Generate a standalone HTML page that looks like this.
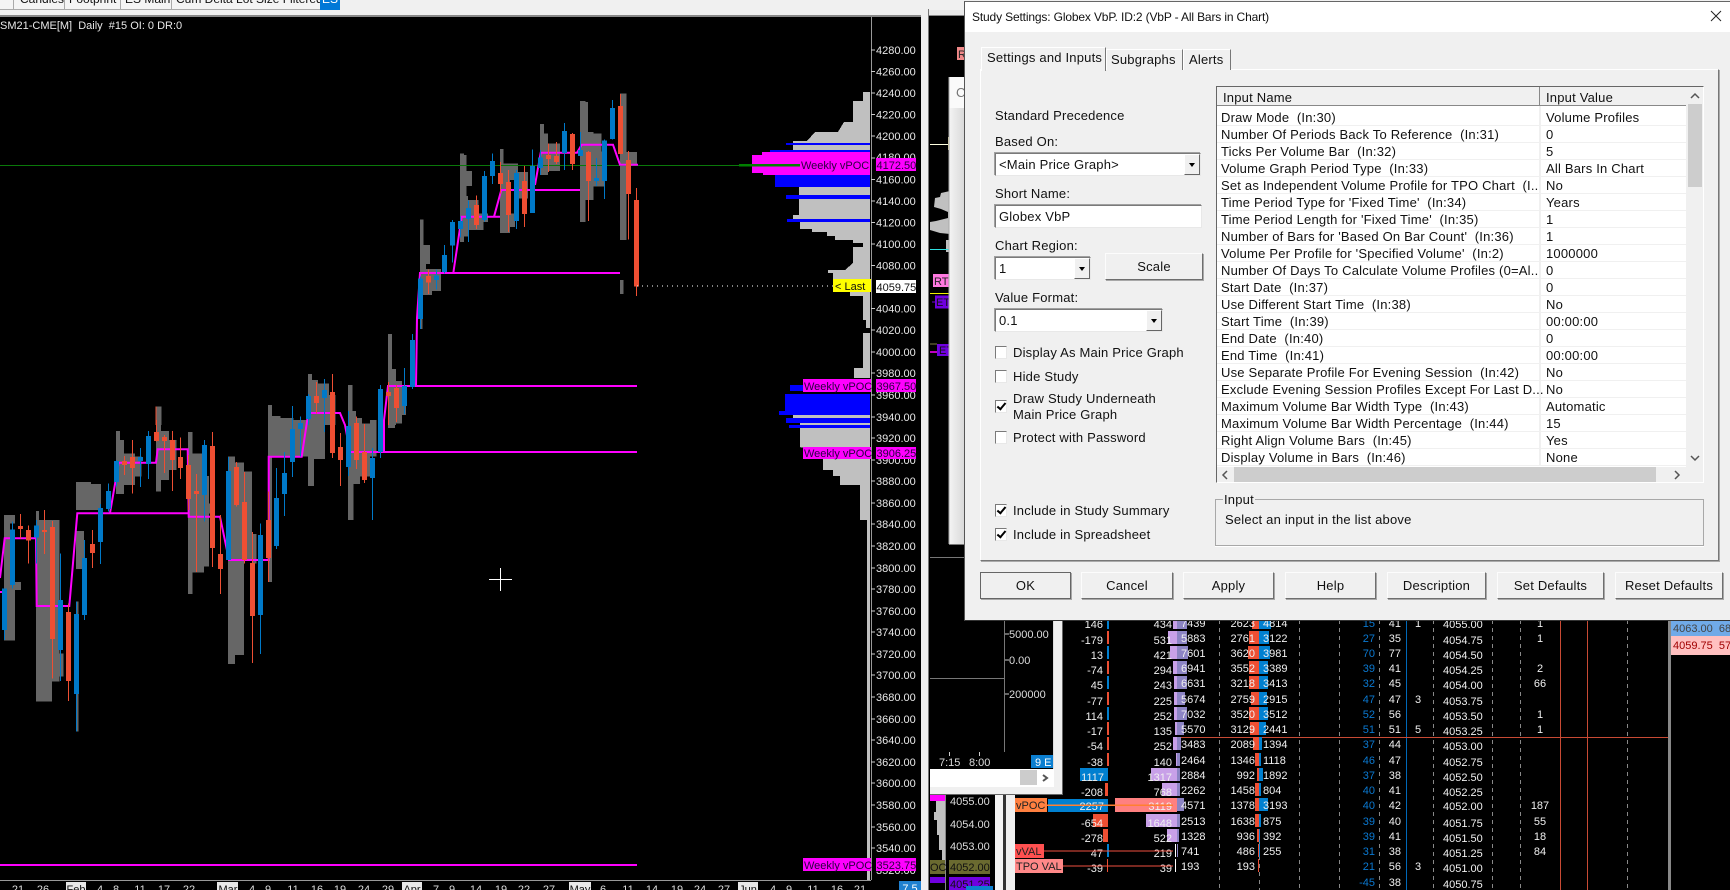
<!DOCTYPE html>
<html><head><meta charset="utf-8"><title>Study Settings</title>
<style>
html,body{margin:0;padding:0;background:#000;width:1730px;height:890px;overflow:hidden;font-family:"Liberation Sans",sans-serif}
svg{position:absolute;left:0;top:0}
.a{position:absolute;white-space:pre;font-size:13px;line-height:15px;letter-spacing:.2px;color:#111}
.b{position:absolute;background:#f0f0f0;border:1px solid;border-color:#fcfcfc #6e6e6e #6e6e6e #fcfcfc;font-size:13px;letter-spacing:.2px;color:#111;text-align:center;box-sizing:border-box;line-height:25px;box-shadow:1px 1px 0 #a8a8a8}
.f{position:absolute;background:#fff;border:1px solid;border-color:#7a7a7a #e8e8e8 #e8e8e8 #7a7a7a;box-sizing:border-box;font-size:13px;letter-spacing:.2px;color:#111;line-height:21px;padding-left:3px;white-space:pre;box-shadow:-1px -1px 0 #a0a0a0}
.ar{position:absolute;right:0;top:0;bottom:0;width:16px;background:#f0f0f0;border:1px solid;border-color:#fff #666 #666 #fff;box-sizing:border-box}
.ar:after{content:"";position:absolute;left:4px;top:8px;border:3px solid transparent;border-top:4px solid #000}
.c{position:absolute;width:12px;height:13px;background:#fff;border:1px solid;border-color:#7a7a7a #e8e8e8 #e8e8e8 #7a7a7a;box-sizing:border-box}
.c.k:after{content:"";position:absolute;left:3px;top:0;width:3px;height:7px;border:solid #000;border-width:0 2px 2px 0;transform:rotate(40deg)}
.r{position:absolute;left:1217px;width:469px;height:16px;background:#fff;border-bottom:1px solid #f0f0f0}
.r span{position:absolute;top:1px;white-space:pre;font-size:13px;line-height:16px;letter-spacing:.2px;color:#111}
.r span:first-child{left:4px}
.r span:last-child{left:329px}
</style></head><body>

<!-- top chrome -->
<div style="position:absolute;left:0;top:0;width:1730px;height:15px;background:#f0f0f0"></div>
<div style="position:absolute;left:0;top:15px;width:922px;height:2px;background:#888"></div>
<div style="position:absolute;left:0;top:0;width:320px;height:9px;background:#f4f4f4;border-bottom:1px solid #aaa"></div>
<div class="a" style="left:20px;top:-8px;font-size:12px;letter-spacing:0">Candles</div>
<div class="a" style="left:69px;top:-8px;font-size:12px;letter-spacing:0">Footprint</div>
<div class="a" style="left:125px;top:-8px;font-size:12px;letter-spacing:0">ES Main</div>
<div class="a" style="left:176px;top:-8px;font-size:12px;letter-spacing:0">Cum Delta Lot Size Filtered</div>
<div style="position:absolute;left:13px;top:0;width:1px;height:9px;background:#aaa"></div>
<div style="position:absolute;left:64px;top:0;width:1px;height:9px;background:#aaa"></div>
<div style="position:absolute;left:120px;top:0;width:1px;height:9px;background:#aaa"></div>
<div style="position:absolute;left:171px;top:0;width:1px;height:9px;background:#aaa"></div>
<div class="a" style="left:320px;top:-8px;width:20px;height:18px;background:#0078d7;color:#fff;font-size:12px;letter-spacing:0;text-align:center">ES</div>

<svg width="1730" height="890" viewBox="0 0 1730 890" font-family="Liberation Sans, sans-serif" font-size="11">
<!-- separators / windows behind -->
<rect x="921" y="9" width="8" height="881" fill="#f0f0f0"/>
<rect x="928" y="9" width="1" height="881" fill="#777"/>
<rect x="929" y="10" width="40" height="5" fill="#e8e8e8"/>
<rect x="929" y="15" width="40" height="1" fill="#888"/>

<g shape-rendering="crispEdges">
<!-- gray VbP in chart -->
<g fill="#666">
<path transform="translate(0 290) scale(.33333)" d="M468 350H484V405H468zM804 345H816V405H804zM816 378H842V405H816zM842 384H880V405H842zM924 252H936V405H924zM936 270H954V405H936zM954 280H987V405H954zM987 315H1007V405H987zM1044 285H1058V405H1044zM1058 363H1068V405H1058zM1068 384H1086V405H1068zM1086 402H1098V405H1086zM1164 132H1176V405H1164zM1176 237H1188V405H1176zM1188 273H1206V400H1188zM1206 290H1218V375H1206zM1260 0H1268V117H1260zM1268 0H1296V14H1268z"/>
<path transform="translate(0 420) scale(.33333)" d="M12 285H45V310H12zM12 310H30V486H12zM12 486H63V510H12zM12 510H45V662H12zM108 273H117V300H108zM108 300H156V845H108zM156 300H178V785H156zM178 700H190V770H178zM228 186H273V192H228zM228 192H303V270H228zM228 333H252V447H228zM228 545H236V935H228zM348 33H360V222H348zM360 60H372V222H360zM372 100H405V195H372zM405 110H425V170H405zM468 0H483V215H468zM468 33H507V180H468zM507 60H530V150H507zM564 36H578V522H564zM578 100H612V458H578zM612 168H627V440H612zM627 250H635V280H627zM684 110H705V732H684zM705 128H732V705H705zM732 155H756V420H732zM756 342H770V430H756zM804 0H816V486H804zM816 0H925V110H816zM924 0H942V198H924zM942 0H975V117H942zM1044 0H1060V300H1044zM1060 0H1080V192H1060zM1080 10H1110V170H1080zM1110 0H1130V110H1110zM1164 0H1185V24H1164z"/>
<path transform="translate(400 80) scale(.33333)" d="M60 418H70V640H60zM70 495H90V552H70zM60 552H78V645H60zM78 567H123V633H78zM78 633H96V645H78zM180 220H192V486H180zM192 225H200V470H192zM200 273H216V318H200zM192 348H204V470H192zM204 360H235V450H204zM235 400H250V450H235zM250 400H264V426H250zM300 207H310V459H300zM310 250H354V300H310zM310 300H330V459H310zM330 400H345V441H330zM354 276H384V356H354zM420 132H432V285H420zM432 160H444V285H432zM444 190H480V273H444zM540 63H556V426H540zM556 66H564V360H556zM564 156H580V360H564zM580 160H604V320H580zM604 215H612V320H604zM660 40H680V480H660zM680 216H711V256H680zM660 600H670V642H660z"/>
</g>
</g>

<!-- right gray profile -->
<g shape-rendering="crispEdges">
<path fill="#c0c0c0" d="M870 92H863V101H853V122H844L838 132H815L807 141H793V150H799V215H793V219H800V229H812V232H827V236H835V240H853V243H863V247H853V263L845 270H828V273H833V292H850V296H863V320H866V328H870zM870 333H863V368H854V378H870zM793 414H870V418H793zM800 423H870V425H800zM800 428H870V447H800zM799 447H870V458H823V470H833V476H840V485H860V520H867V880H870V458z"/>
<path fill="#0000ff" d="M786 143H870V145H786zM770 150H870V152H770zM775 175H870V187H775zM786 195H870V199H786zM787 219H870V222H787zM790 385H870V391H790zM785 394H870V411H785zM779 411H870V415H779zM786 418H870V423H786zM789 425H870V428H789z"/>
<path fill="#ff00ff" d="M762 152H870V155H762zM752 155H870V173H752zM763 173H870V175H763z"/>
</g>

<!-- green line -->
<rect x="0" y="165" width="740" height="1" fill="#0a780a"/>
<rect x="739" y="164" width="61" height="2.500" fill="#008000"/>

<!-- magenta -->
<path fill="none" stroke="#ff00ff" stroke-width="2" d="M0 578L4.700 538.300H36L36.700 606H69.300L77.300 513.300H188.700M110 513L118.700 462.700H156L157.700 449.300H187.700L188.700 516.700H220L229 560H268.700V456.700H301.700L308 415L310 413H340L345 425L350 452H637M384 452V420L388 386H637M416 386L417 318L420 273H620M453.300 273L461.700 216.700H500M494 216.700L501.300 190H580M535 185L540.700 152.700H577L581.700 144.700H613L620 164.700H638M0 865H637"/>
<path fill="none" stroke="#ff00ff" stroke-width="2" d="M0 592H3"/>

<!-- candles -->
<g shape-rendering="crispEdges" fill="none">
<g transform="translate(0 290) scale(.33333)">
<path stroke="#0079c8" stroke-width="3" d="M877 348V405M901 380V405M925 312V405M973 267V405M1045 363V405M1141 285V405M1213 234V372M1237 132V297M1261 0V117"/>
<path stroke="#0079c8" stroke-width="15" d="M901 399V405M925 318V387M973 300V324M1141 297V405M1213 288V348M1237 150V291M1261 0V87"/>
<path stroke="#ee4f33" stroke-width="3" d="M468 350V405M949 276V370M997 252V405M1069 380V405M1165 276V405M1189 285V396M1285 0V12"/>
<path stroke="#ee4f33" stroke-width="15" d="M949 318V339M997 306V405M1069 399V405M1165 306V318M1189 294V354"/>
</g>
<g transform="translate(0 420) scale(.33333)">
<path stroke="#0079c8" stroke-width="3" d="M13 505V660M37 305V505M109 300V430M181 400V783M229 545V935M253 360V600M301 252V432M325 190V275M349 120V200M421 84V201M445 33V177M613 60V305M685 111V420M781 310V702M829 144V387M853 96V288M877 0V171M901 0V110M973 0V36M1045 0V168M1117 84V300M1141 0V114"/>
<path stroke="#0079c8" stroke-width="15" d="M13 505V630M37 328V495M109 316V352M181 540V690M229 582V822M253 414V585M301 264V366M325 213V267M349 123V186M421 111V123M445 48V132M613 75V225M685 153V420M781 345V585M829 234V378M853 159V222M877 27V126M901 9V27M1045 18V141M1117 114V174M1141 0V96"/>
<path stroke="#ee4f33" stroke-width="3" d="M61 282V355M85 316V430M133 270V402M157 303V775M205 550V843M277 330V444M373 108V165M397 60V220M469 0V65M493 45V159M517 33V213M541 52V177M565 105V270M589 162V456M637 36V441M661 285V522M709 126V260M733 156V430M757 336V729M805 215V486M997 0V114M1021 39V198M1069 0V147M1093 12V189"/>
<path stroke="#ee4f33" stroke-width="15" d="M61 318V327M85 330V362M133 330V336M157 321V657M205 576V783M277 372V399M373 123V135M397 111V144M469 36V63M493 51V63M517 60V120M541 111V144M565 135V237M589 213V222M637 78V384M661 402V447M709 141V255M733 246V420M757 429V588M805 300V414M997 0V99M1021 81V120M1069 9V120M1093 96V180"/>
</g>
<g transform="translate(400 80) scale(.33333)">
<path stroke="#0079c8" stroke-width="3" d="M61 590V720M109 568V628M133 495V580M157 420V548M181 410V472M205 362V486M253 273V425M277 220V312M349 270V447M397 208V399M421 210V285M493 129V270M541 156V228M589 234V318M613 178V357M637 60V178"/>
<path stroke="#0079c8" stroke-width="15" d="M61 595V716M109 586V600M133 525V576M157 426V497M181 423V447M205 384V417M253 288V420M277 243V288M349 279V423M397 258V399M421 232V264M493 153V219M541 210V228M589 294V303M613 182V303M637 84V177"/>
<path stroke="#ee4f33" stroke-width="3" d="M85 568V640M229 346V447M301 246V340M325 270V456M373 258V441M445 190V276M469 186V252M517 159V270M565 213V423M661 42V222M685 213V478M709 324V648"/>
<path stroke="#ee4f33" stroke-width="15" d="M85 588V608M229 375V435M301 279V312M325 306V405M373 303V402M445 225V237M469 228V246M517 162V252M565 216V303M661 78V222M685 240V342M709 360V620"/>
</g>
</g>

<!-- last dotted, crosshair -->
<path d="M637 286H833" stroke="#fff" stroke-dasharray="1 4" stroke-width="1"/>
<path d="M489 579.500H512M500.500 568V591" stroke="#fff" stroke-width="1" fill="none"/>

<!-- chart title -->
<text x="0" y="29" fill="#e8e8e8" font-size="11" xml:space="preserve">SM21-CME[M]  Daily  #15 OI: 0 DR:0</text>

<!-- price axis -->
<rect x="871" y="17" width="1" height="863" fill="#999"/>
<path stroke="#ccc" d="M871 50h4M871 71.500h4M871 93h4M871 114.500h4M871 136h4M871 158h4M871 179.500h4M871 201h4M871 222.500h4M871 244h4M871 265.500h4M871 308.500h4M871 330h4M871 352h4M871 373h4M871 395h4M871 417h4M871 438h4M871 460h4M871 481h4M871 503h4M871 524h4M871 546h4M871 568h4M871 589h4M871 611h4M871 632h4M871 654h4M871 675h4M871 697h4M871 719h4M871 740h4M871 762h4M871 783h4M871 805h4M871 827h4M871 848h4"/>
<g fill="#e8e8e8">
<text x="876" y="54">4280.00</text><text x="876" y="75.500">4260.00</text><text x="876" y="97">4240.00</text><text x="876" y="118.500">4220.00</text><text x="876" y="140">4200.00</text><text x="876" y="161">4180.00</text><text x="876" y="183.500">4160.00</text><text x="876" y="205">4140.00</text><text x="876" y="226.500">4120.00</text><text x="876" y="248">4100.00</text><text x="876" y="269.500">4080.00</text><text x="876" y="312.500">4040.00</text><text x="876" y="334">4020.00</text><text x="876" y="356">4000.00</text><text x="876" y="377">3980.00</text><text x="876" y="399">3960.00</text><text x="876" y="421">3940.00</text><text x="876" y="442">3920.00</text><text x="876" y="464">3900.00</text><text x="876" y="485">3880.00</text><text x="876" y="507">3860.00</text><text x="876" y="528">3840.00</text><text x="876" y="550">3820.00</text><text x="876" y="572">3800.00</text><text x="876" y="593">3780.00</text><text x="876" y="615">3760.00</text><text x="876" y="636">3740.00</text><text x="876" y="658">3720.00</text><text x="876" y="679">3700.00</text><text x="876" y="701">3680.00</text><text x="876" y="723">3660.00</text><text x="876" y="744">3640.00</text><text x="876" y="766">3620.00</text><text x="876" y="787">3600.00</text><text x="876" y="809">3580.00</text><text x="876" y="831">3560.00</text><text x="876" y="852">3540.00</text><text x="876" y="874">3520.00</text>
</g>

<!-- vPOC labels -->
<g fill="#ff00ff" shape-rendering="crispEdges">
<rect x="876" y="158" width="40" height="13"/><rect x="803" y="379" width="68" height="13"/><rect x="876" y="379" width="40" height="13"/><rect x="803" y="447" width="68" height="12"/><rect x="876" y="447" width="40" height="12"/><rect x="803" y="858" width="68" height="13"/><rect x="876" y="858" width="40" height="13"/>
</g>
<g fill="#2a0040">
<text x="801" y="169">Weekly vPOC</text><text x="876.500" y="169">4172.50</text>
<text x="804" y="390">Weekly vPOC</text><text x="876.500" y="390">3967.50</text>
<text x="804" y="457">Weekly vPOC</text><text x="876.500" y="457">3906.25</text>
<text x="804" y="869">Weekly vPOC</text><text x="876.500" y="869">3523.75</text>
</g>
<rect x="833" y="279" width="38" height="13" fill="#ffff00"/>
<text x="835" y="290" fill="#111" xml:space="preserve">&lt; Last</text>
<rect x="876" y="280" width="40" height="13" fill="#fff"/>
<text x="876.500" y="291" fill="#111">4059.75</text>

<!-- bottom axis -->
<rect x="0" y="880" width="871" height="1" fill="#999"/>
<g fill="#dcdcdc" text-anchor="middle">
<text x="18" y="893">21</text><text x="43" y="893">26</text><text x="100" y="893">4</text><text x="116" y="893">8</text><text x="140" y="893">11</text><text x="164" y="893">17</text><text x="189" y="893">22</text><text x="252" y="893">4</text><text x="268" y="893">9</text><text x="293" y="893">11</text><text x="317" y="893">16</text><text x="340" y="893">19</text><text x="364" y="893">24</text><text x="388" y="893">29</text><text x="436" y="893">7</text><text x="452" y="893">9</text><text x="476" y="893">14</text><text x="501" y="893">19</text><text x="524" y="893">22</text><text x="549" y="893">27</text><text x="603" y="893">6</text><text x="628" y="893">11</text><text x="652" y="893">14</text><text x="677" y="893">19</text><text x="700" y="893">24</text><text x="724" y="893">27</text><text x="773" y="893">4</text><text x="789" y="893">9</text><text x="813" y="893">11</text><text x="837" y="893">16</text><text x="860" y="893">21</text>
</g>
<g fill="#e8e8e8"><rect x="66" y="882" width="20" height="8"/><rect x="217" y="882" width="21" height="8"/><rect x="402" y="882" width="20" height="8"/><rect x="569" y="882" width="22" height="8"/><rect x="738" y="882" width="20" height="8"/></g>
<g fill="#111" text-anchor="middle"><text x="76" y="893">Feb</text><text x="228" y="893">Mar</text><text x="412" y="893">Apr</text><text x="580" y="893">May</text><text x="748" y="893">Jun</text></g>
<rect x="899" y="881" width="22" height="9" fill="#1f80d0"/>
<text x="910" y="892" fill="#fff" text-anchor="middle">7.5</text>

<!-- middle window contents -->
<path fill="#c0c0c0" d="M950 191L941 193L940 197L935 198L934 207L941 209L948 212V218L936 221L930 222V230L940 233L950 234zM946 240H950V252H946z"/>
<rect x="930" y="144" width="18" height="1" fill="#ffffe0"/>
<rect x="948" y="137" width="2" height="13" fill="#e0d8a0"/>
<rect x="930" y="249" width="20" height="1" fill="#30e0e0"/>
<rect x="933" y="274" width="16" height="13" fill="#ff78e0"/>
<text x="934" y="285" fill="#222">RTH</text>
<rect x="930" y="293" width="20" height="1" fill="#f0f000"/>
<rect x="935" y="295.500" width="14" height="13" fill="#7000e0"/>
<text x="936" y="306" fill="#111">ETH</text>
<path d="M932 302H935" stroke="#7000e0"/>
<rect x="937" y="344" width="12" height="12" fill="#7000e0"/>
<text x="939" y="354" fill="#111">ET</text>
<path d="M930 344H937" stroke="#808040"/>
<path d="M930 352H937" stroke="#ff00ff" stroke-width="1.500"/>
<rect x="957" y="47" width="8" height="13" fill="#f08888"/>
<text x="958" y="58" fill="#222">R</text>
<rect x="930" y="557" width="35" height="1" fill="#777"/>

<!-- second dialog edge -->
<defs><linearGradient id="g" x1="0" x2="1"><stop offset="0" stop-color="#f4f4f4"/><stop offset="1" stop-color="#d8d8d8"/></linearGradient></defs>
<rect x="949" y="77" width="16" height="467" fill="url(#g)"/>
<rect x="949" y="77" width="16" height="31" fill="#fafafa"/>
<rect x="949" y="544" width="16" height="1" fill="#777"/>
<rect x="948.500" y="77" width="1" height="467" fill="#aaa"/>
<text x="956" y="97" fill="#777" font-size="13">C</text>

<!-- panel window 930..1063 -->
<rect x="1004" y="620" width="1" height="132" fill="#777"/>
<rect x="930" y="678" width="74" height="1" fill="#777"/>
<path stroke="#ccc" d="M1005 634h4M1005 660h4M1005 694h4M949.500 752v4M979.500 752v4"/>
<g fill="#dcdcdc">
<text x="1009" y="638">5000.00</text><text x="1009" y="664">0.00</text><text x="1009" y="698">200000</text>
<text x="939" y="766">7:15</text><text x="969" y="766">8:00</text>
</g>
<rect x="1031" y="755" width="22" height="13" fill="#0c7fd0"/>
<text x="1035" y="766" fill="#fff">9 E</text>
<rect x="930" y="769" width="133" height="26" fill="#f0f0f0"/>
<rect x="1053" y="620" width="10" height="175" fill="#f0f0f0"/>
<rect x="930" y="769" width="124" height="18" fill="#fff"/>
<rect x="1020" y="770" width="17" height="15" fill="#ccc"/>
<path d="M1043 775L1047 778L1043 781" stroke="#555" stroke-width="2" fill="none"/>
<rect x="1062" y="620" width="1" height="175" fill="#666"/>
<rect x="930" y="794" width="133" height="1" fill="#666"/>
<rect x="1053" y="620" width="1" height="149" fill="#ddd"/>

<!-- lower small chart -->
<rect x="930" y="795" width="15" height="6" fill="#ff00ff"/>
<path fill="#c0c0c0" d="M945 801H936V812H934V820H937V835H939V850H942V870H945z"/>
<rect x="945" y="795" width="1" height="95" fill="#888"/>
<g fill="#dcdcdc"><text x="950" y="805">4055.00</text><text x="950" y="828">4054.00</text><text x="950" y="850">4053.00</text></g>
<rect x="930" y="860" width="15" height="14" fill="#6a6a30"/>
<text x="930" y="871" fill="#111">OC</text>
<rect x="949" y="860" width="41" height="14" fill="#6a6a30"/>
<text x="950" y="871" fill="#111">4052.00</text>
<rect x="930" y="877" width="15" height="6" fill="#7000e0"/>
<rect x="949" y="877" width="41" height="13" fill="#7000e0"/>
<text x="950" y="888" fill="#111">4051.25</text>
<rect x="966" y="886" width="27" height="4" fill="#0c7fd0"/>
<rect x="995" y="795" width="8" height="95" fill="#f4f4f4"/>
<rect x="1003" y="795" width="3" height="95" fill="#333"/>
<rect x="1006" y="795" width="9" height="95" fill="#f0f0f0"/>

<!-- DOM ladder lines -->
<g stroke="#888" stroke-dasharray="4 4" fill="none">
<path d="M1219.500 620V890M1299.500 620V890M1339.500 620V890M1379.500 620V890M1433.500 620V890M1492.500 620V890M1520.500 620V890M1627.500 620V890M1259.500 840V890"/>
</g>
<path d="M1406.500 620V890" stroke="#0068b8"/>
<path d="M1560.500 620V890M1587.500 620V890" stroke="#c84a34"/>
<rect x="1177" y="737" width="491" height="1" fill="#c84a34"/>
<rect x="1668" y="620" width="3" height="270" fill="#888"/>

<!-- ladder bars -->
<g shape-rendering="crispEdges">
<path fill="#0080d0" d="M1107 616h2v13h-2zM1107 646h2v13h-2zM1107 676h2v13h-2zM1107 707h2v13h-2zM1080 768h28v13h-28zM1048 799h60v13h-60zM1107 844h2v13h-2z"/>
<path fill="#ee4f33" d="M1107 631h2v13h-2zM1107 661h2v13h-2zM1107 692h2v13h-2zM1107 722h2v13h-2zM1107 737h2v13h-2zM1107 753h2v13h-2zM1105 783h3v13h-3zM1093 814h15v13h-15zM1103 829h5v13h-5zM1107 859h1v13h-1z"/>
<path fill="#c8a0e8" d="M1173 616h4v13h-4zM1168 631h9v13h-9zM1170 646h7v13h-7zM1173 661h4v13h-4zM1174 676h3v13h-3zM1174 692h3v13h-3zM1174 707h3v13h-3zM1175 722h2v13h-2zM1173 737h4v13h-4zM1176 753h1v13h-1zM1151 768h26v13h-26zM1162 783h15v13h-15zM1146 814h31v13h-31zM1167 829h10v13h-10z"/>
<rect x="1115" y="798" width="62" height="14" fill="#ff8080"/>
<path fill="#fff" d="M1175 844h1v13h-1zM1175 859h1v13h-1z"/>
<path fill="#8c84c4" d="M1177 616h10v13h-10zM1177 631h10v13h-10zM1177 646h11v13h-11zM1177 661h10v13h-10zM1177 676h10v13h-10zM1177 692h8v13h-8zM1177 707h10v13h-10zM1177 722h7v13h-7zM1177 737h4v13h-4zM1177 753h3v13h-3zM1177 768h3v13h-3zM1177 783h3v13h-3zM1177 798h7v13h-7zM1177 814h3v13h-3zM1177 829h2v13h-2zM1177 844h1v13h-1z"/>
<path fill="#ee4f33" d="M1252 616h7v13h-7zM1249 631h10v13h-10zM1248 646h11v13h-11zM1249 661h10v13h-10zM1249 676h10v13h-10zM1251 692h8v13h-8zM1249 707h10v13h-10zM1250 722h9v13h-9zM1253 737h6v13h-6zM1255 753h4v13h-4zM1257 768h2v13h-2zM1255 783h4v13h-4zM1255 798h4v13h-4zM1255 814h4v13h-4zM1257 829h2v13h-2zM1258 844h1v13h-1zM1258 859h1v13h-1z"/>
<path fill="#0080d0" d="M1259 616h12v13h-12zM1259 631h10v13h-10zM1259 646h11v13h-11zM1259 661h9v13h-9zM1259 676h9v13h-9zM1259 692h8v13h-8zM1259 707h9v13h-9zM1259 722h7v13h-7zM1259 737h3v13h-3zM1259 753h2v13h-2zM1259 768h4v13h-4zM1259 783h2v13h-2zM1259 798h9v13h-9zM1259 814h2v13h-2zM1259 829h1v13h-1zM1259 844h1v13h-1z"/>
</g>

<!-- ladder text -->
<g fill="#f0f0f0" text-anchor="end">
<text x="1103" y="628">146</text><text x="1103" y="644">-179</text><text x="1103" y="659">13</text><text x="1103" y="674">-74</text><text x="1103" y="689">45</text><text x="1103" y="705">-77</text><text x="1103" y="720">114</text><text x="1103" y="735">-17</text><text x="1103" y="750">-54</text><text x="1103" y="766">-38</text><text x="1104" y="781">1117</text><text x="1103" y="796">-208</text><text x="1104" y="810">2257</text><text x="1103" y="827">-654</text><text x="1103" y="842">-278</text><text x="1103" y="857">47</text><text x="1103" y="872">-39</text>
<text x="1172" y="628">434</text><text x="1172" y="644">531</text><text x="1172" y="659">421</text><text x="1172" y="674">294</text><text x="1172" y="689">243</text><text x="1172" y="705">225</text><text x="1172" y="720">252</text><text x="1172" y="735">135</text><text x="1172" y="750">252</text><text x="1172" y="766">140</text><text x="1172" y="781">1317</text><text x="1172" y="796">768</text><text x="1172" y="810">3119</text><text x="1172" y="827">1648</text><text x="1172" y="842">522</text><text x="1172" y="857">219</text><text x="1172" y="872">39</text>
<text x="1255" y="627">2623</text><text x="1255" y="642">2761</text><text x="1255" y="657">3620</text><text x="1255" y="672">3552</text><text x="1255" y="687">3218</text><text x="1255" y="703">2759</text><text x="1255" y="718">3520</text><text x="1255" y="733">3129</text><text x="1255" y="748">2089</text><text x="1255" y="764">1346</text><text x="1255" y="779">992</text><text x="1255" y="794">1458</text><text x="1255" y="809">1378</text><text x="1255" y="825">1638</text><text x="1255" y="840">936</text><text x="1255" y="855">486</text><text x="1255" y="870">193</text>
<text x="1401" y="627">41</text><text x="1401" y="642">35</text><text x="1401" y="657">77</text><text x="1401" y="672">41</text><text x="1401" y="687">45</text><text x="1401" y="703">47</text><text x="1401" y="718">56</text><text x="1401" y="733">51</text><text x="1401" y="748">44</text><text x="1401" y="764">47</text><text x="1401" y="779">38</text><text x="1401" y="794">41</text><text x="1401" y="809">42</text><text x="1401" y="825">40</text><text x="1401" y="840">41</text><text x="1401" y="855">38</text><text x="1401" y="870">56</text><text x="1401" y="886">38</text>
</g>
<g fill="#f0f0f0">
<text x="1181" y="627">7439</text><text x="1181" y="642">5883</text><text x="1181" y="657">7601</text><text x="1181" y="672">6941</text><text x="1181" y="687">6631</text><text x="1181" y="703">5674</text><text x="1181" y="718">7032</text><text x="1181" y="733">5570</text><text x="1181" y="748">3483</text><text x="1181" y="764">2464</text><text x="1181" y="779">2884</text><text x="1181" y="794">2262</text><text x="1181" y="809">4571</text><text x="1181" y="825">2513</text><text x="1181" y="840">1328</text><text x="1181" y="855">741</text><text x="1181" y="870">193</text>
<text x="1263" y="627">4814</text><text x="1263" y="642">3122</text><text x="1263" y="657">3981</text><text x="1263" y="672">3389</text><text x="1263" y="687">3413</text><text x="1263" y="703">2915</text><text x="1263" y="718">3512</text><text x="1263" y="733">2441</text><text x="1263" y="748">1394</text><text x="1263" y="764">1118</text><text x="1263" y="779">1892</text><text x="1263" y="794">804</text><text x="1263" y="809">3193</text><text x="1263" y="825">875</text><text x="1263" y="840">392</text><text x="1263" y="855">255</text>
<text x="1443" y="628">4055.00</text><text x="1443" y="644">4054.75</text><text x="1443" y="659">4054.50</text><text x="1443" y="674">4054.25</text><text x="1443" y="689">4054.00</text><text x="1443" y="705">4053.75</text><text x="1443" y="720">4053.50</text><text x="1443" y="735">4053.25</text><text x="1443" y="750">4053.00</text><text x="1443" y="766">4052.75</text><text x="1443" y="781">4052.50</text><text x="1443" y="796">4052.25</text><text x="1443" y="810">4052.00</text><text x="1443" y="827">4051.75</text><text x="1443" y="842">4051.50</text><text x="1443" y="857">4051.25</text><text x="1443" y="872">4051.00</text><text x="1443" y="888">4050.75</text>
</g>
<g fill="#0a78d0" text-anchor="end">
<text x="1375" y="627">15</text><text x="1375" y="642">27</text><text x="1375" y="657">70</text><text x="1375" y="672">39</text><text x="1375" y="687">32</text><text x="1375" y="703">47</text><text x="1375" y="718">52</text><text x="1375" y="733">51</text><text x="1375" y="748">37</text><text x="1375" y="764">46</text><text x="1375" y="779">37</text><text x="1375" y="794">40</text><text x="1375" y="809">40</text><text x="1375" y="825">39</text><text x="1375" y="840">39</text><text x="1375" y="855">31</text><text x="1375" y="870">21</text><text x="1375" y="886">-45</text>
</g>
<g fill="#f0f0f0" text-anchor="middle">
<text x="1418" y="627">1</text><text x="1418" y="703">3</text><text x="1418" y="733">5</text><text x="1418" y="870">3</text>
<text x="1540" y="627">1</text><text x="1540" y="642">1</text><text x="1540" y="672">2</text><text x="1540" y="687">66</text><text x="1540" y="718">1</text><text x="1540" y="733">1</text><text x="1540" y="809">187</text><text x="1540" y="825">55</text><text x="1540" y="840">18</text><text x="1540" y="855">84</text>
</g>

<!-- ladder labels -->
<rect x="1015" y="798" width="32" height="14" fill="#ff8040"/>
<text x="1016" y="809" fill="#222">vPOC</text>
<rect x="1047" y="804.500" width="126" height="1.500" fill="#ff8030"/>
<rect x="1015" y="844" width="29" height="14" fill="#ff5050"/>
<text x="1016" y="855" fill="#222">vVAL</text>
<rect x="1044" y="850.500" width="129" height="1" fill="#f05040"/>
<rect x="1015" y="859" width="48" height="14" fill="#ff8888"/>
<text x="1016" y="870" fill="#222">TPO VAL</text>
<rect x="1063" y="865.500" width="110" height="1" fill="#f05040"/>

<!-- right table -->
<rect x="1671" y="620" width="59" height="16" fill="#70aae8"/>
<text x="1673" y="632" fill="#444" xml:space="preserve">4063.00  68</text>
<rect x="1671" y="636" width="59" height="19" fill="#ffc0c0"/>
<text x="1673" y="649" fill="#a00000" xml:space="preserve">4059.75  57</text>
</svg>

<!-- DIALOG -->
<div style="position:absolute;left:964px;top:1px;width:766px;height:620px;background:#f0f0f0;border-left:1px solid #555;border-top:1px solid #666;border-bottom:1px solid #333;box-sizing:border-box"></div>
<div style="position:absolute;left:965px;top:2px;width:765px;height:30px;background:#fff"></div>
<div class="a" style="left:972px;top:10px;font-size:12px;letter-spacing:-.15px">Study Settings: Globex VbP. ID:2 (VbP - All Bars in Chart)</div>
<svg style="left:1710px;top:10px" width="12" height="12"><path d="M1 1L11 11M11 1L1 11" stroke="#222" stroke-width="1"/></svg>

<!-- tab panel -->
<div style="position:absolute;left:980px;top:69px;width:739px;height:492px;border:1px solid;border-color:#fff #777 #777 #fff;box-sizing:border-box;background:#f0f0f0;box-shadow:1px 1px 0 #aaa"></div>
<div style="position:absolute;left:981px;top:47px;width:125px;height:24px;background:#f0f0f0;border:1px solid;border-color:#fff #777 transparent #fff;border-bottom:0;box-sizing:border-box"></div>
<div style="position:absolute;left:1106px;top:49px;width:77px;height:21px;background:#f0f0f0;border:1px solid;border-color:#fff #777 transparent #fff;border-bottom:0;box-sizing:border-box"></div>
<div style="position:absolute;left:1183px;top:49px;width:48px;height:21px;background:#f0f0f0;border:1px solid;border-color:#fff #777 transparent #fff;border-bottom:0;box-sizing:border-box"></div>
<div class="a" style="left:987px;top:50px">Settings and Inputs</div>
<div class="a" style="left:1111px;top:52px">Subgraphs</div>
<div class="a" style="left:1189px;top:52px">Alerts</div>

<!-- left controls -->
<div class="a" style="left:995px;top:108px">Standard Precedence</div>
<div class="a" style="left:995px;top:134px">Based On:</div>
<div class="f" style="left:995px;top:153px;width:206px;height:23px">&lt;Main Price Graph&gt;<div class="ar"></div></div>
<div class="a" style="left:995px;top:186px">Short Name:</div>
<div class="f" style="left:995px;top:205px;width:207px;height:23px">Globex VbP</div>
<div class="a" style="left:995px;top:238px">Chart Region:</div>
<div class="f" style="left:995px;top:257px;width:96px;height:23px">1<div class="ar"></div></div>
<div class="b" style="left:1105px;top:253px;width:98px;height:27px">Scale</div>
<div class="a" style="left:995px;top:290px">Value Format:</div>
<div class="f" style="left:995px;top:309px;width:168px;height:23px">0.1<div class="ar"></div></div>

<div class="c" style="left:995px;top:346px"></div><div class="a" style="left:1013px;top:345px">Display As Main Price Graph</div>
<div class="c" style="left:995px;top:370px"></div><div class="a" style="left:1013px;top:369px">Hide Study</div>
<div class="c k" style="left:995px;top:400px"></div><div class="a" style="left:1013px;top:391px;line-height:16px">Draw Study Underneath
Main Price Graph</div>
<div class="c" style="left:995px;top:431px"></div><div class="a" style="left:1013px;top:430px">Protect with Password</div>
<div class="c k" style="left:995px;top:504px"></div><div class="a" style="left:1013px;top:503px">Include in Study Summary</div>
<div class="c k" style="left:995px;top:528px"></div><div class="a" style="left:1013px;top:527px">Include in Spreadsheet</div>

<!-- list -->
<div style="position:absolute;left:1216px;top:86px;width:488px;height:397px;background:#f0f0f0;border:1px solid;border-color:#666 #fff #fff #666;box-sizing:border-box"></div>
<div style="position:absolute;left:1217px;top:87px;width:469px;height:19px;background:#f0f0f0;border-bottom:1px solid #888;box-sizing:border-box"></div>
<div style="position:absolute;left:1539px;top:87px;width:1px;height:19px;background:#888"></div>
<div class="a" style="left:1223px;top:90px">Input Name</div>
<div class="a" style="left:1546px;top:90px">Input Value</div>
<div style="position:absolute;left:1217px;top:106px;width:469px;height:361px;background:#fff"></div>
<div class="r" style="top:109px"><span>Draw Mode  (In:30)</span><span>Volume Profiles</span></div>
<div class="r" style="top:126px"><span>Number Of Periods Back To Reference  (In:31)</span><span>0</span></div>
<div class="r" style="top:143px"><span>Ticks Per Volume Bar  (In:32)</span><span>5</span></div>
<div class="r" style="top:160px"><span>Volume Graph Period Type  (In:33)</span><span>All Bars In Chart</span></div>
<div class="r" style="top:177px"><span>Set as Independent Volume Profile for TPO Chart  (I...</span><span>No</span></div>
<div class="r" style="top:194px"><span>Time Period Type for 'Fixed Time'  (In:34)</span><span>Years</span></div>
<div class="r" style="top:211px"><span>Time Period Length for 'Fixed Time'  (In:35)</span><span>1</span></div>
<div class="r" style="top:228px"><span>Number of Bars for 'Based On Bar Count'  (In:36)</span><span>1</span></div>
<div class="r" style="top:245px"><span>Volume Per Profile for 'Specified Volume'  (In:2)</span><span>1000000</span></div>
<div class="r" style="top:262px"><span>Number Of Days To Calculate Volume Profiles (0=Al...</span><span>0</span></div>
<div class="r" style="top:279px"><span>Start Date  (In:37)</span><span>0</span></div>
<div class="r" style="top:296px"><span>Use Different Start Time  (In:38)</span><span>No</span></div>
<div class="r" style="top:313px"><span>Start Time  (In:39)</span><span>00:00:00</span></div>
<div class="r" style="top:330px"><span>End Date  (In:40)</span><span>0</span></div>
<div class="r" style="top:347px"><span>End Time  (In:41)</span><span>00:00:00</span></div>
<div class="r" style="top:364px"><span>Use Separate Profile For Evening Session  (In:42)</span><span>No</span></div>
<div class="r" style="top:381px"><span>Exclude Evening Session Profiles Except For Last D...</span><span>No</span></div>
<div class="r" style="top:398px"><span>Maximum Volume Bar Width Type  (In:43)</span><span>Automatic</span></div>
<div class="r" style="top:415px"><span>Maximum Volume Bar Width Percentage  (In:44)</span><span>15</span></div>
<div class="r" style="top:432px"><span>Right Align Volume Bars  (In:45)</span><span>Yes</span></div>
<div class="r" style="top:449px"><span>Display Volume in Bars  (In:46)</span><span>None</span></div>
<div style="position:absolute;left:1539px;top:106px;width:2px;height:360px;background:#f0f0f0"></div>
<div style="position:absolute;left:1688px;top:104px;width:14px;height:83px;background:#cdcdcd"></div>
<svg style="left:1690px;top:92px" width="10" height="8"><path d="M1 6L5 2L9 6" stroke="#555" stroke-width="1.500" fill="none"/></svg>
<svg style="left:1690px;top:454px" width="10" height="8"><path d="M1 2L5 6L9 2" stroke="#555" stroke-width="1.500" fill="none"/></svg>
<div style="position:absolute;left:1234px;top:467px;width:422px;height:15px;background:#cdcdcd"></div>
<svg style="left:1221px;top:470px" width="8" height="10"><path d="M6 1L2 5L6 9" stroke="#555" stroke-width="1.500" fill="none"/></svg>
<svg style="left:1673px;top:470px" width="8" height="10"><path d="M2 1L6 5L2 9" stroke="#555" stroke-width="1.500" fill="none"/></svg>

<!-- group box -->
<div style="position:absolute;left:1215px;top:499px;width:489px;height:47px;border:1px solid #a8a8a8;box-sizing:border-box;box-shadow:0 1px 0 #fff"></div>
<div class="a" style="left:1223px;top:492px;background:#f0f0f0;padding:0 1px">Input</div>
<div class="a" style="left:1225px;top:512px">Select an input in the list above</div>

<!-- buttons -->
<div class="b" style="left:980px;top:572px;width:91px;height:27px;border-color:#666">OK</div>
<div class="b" style="left:1081px;top:572px;width:92px;height:27px">Cancel</div>
<div class="b" style="left:1183px;top:572px;width:91px;height:27px">Apply</div>
<div class="b" style="left:1285px;top:572px;width:91px;height:27px">Help</div>
<div class="b" style="left:1387px;top:572px;width:99px;height:27px">Description</div>
<div class="b" style="left:1497px;top:572px;width:107px;height:27px">Set Defaults</div>
<div class="b" style="left:1615px;top:572px;width:108px;height:27px">Reset Defaults</div>
</body></html>
